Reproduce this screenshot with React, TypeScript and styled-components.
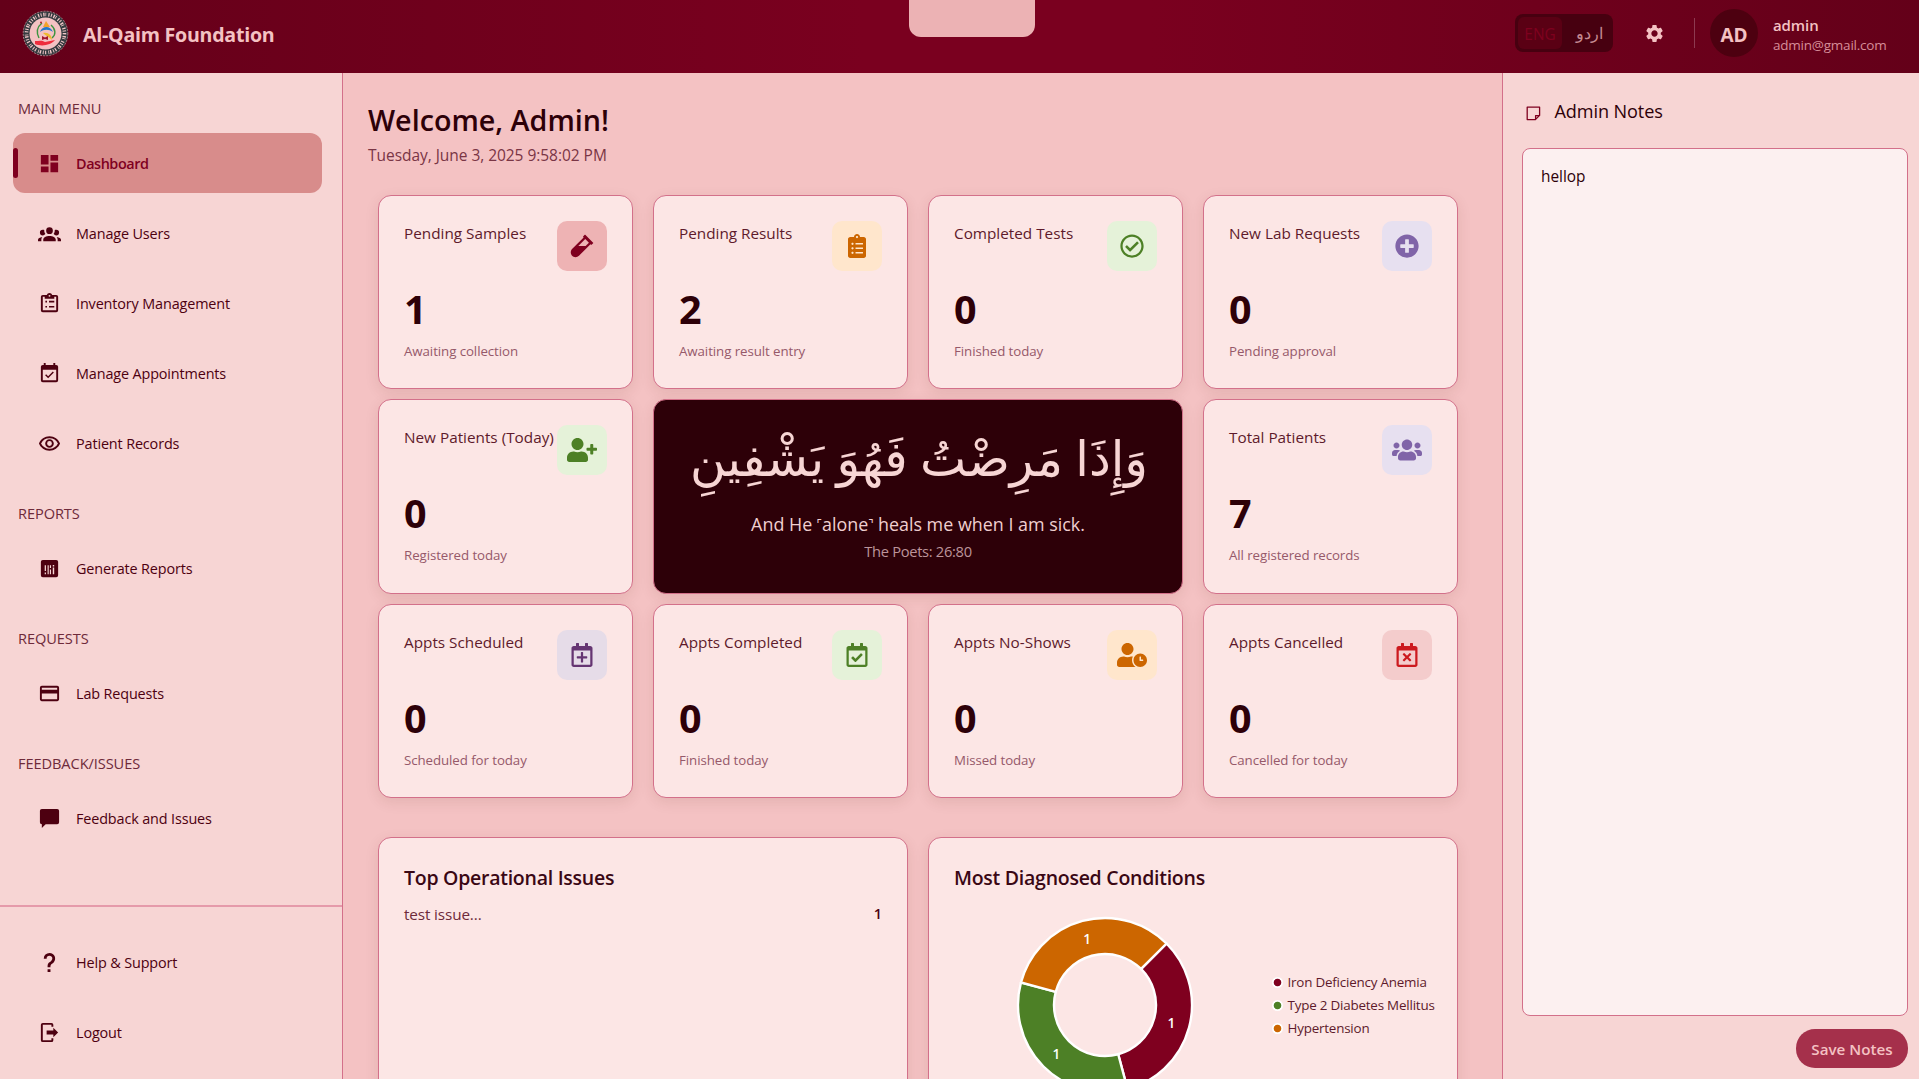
import React from 'react';
import styled, { createGlobalStyle } from 'styled-components';
import { MdDashboard, MdOutlineRemoveRedEye, MdPayment, MdSettings } from 'react-icons/md';
import {
  FaVial, FaClipboardList, FaRegCheckCircle, FaPlusCircle, FaUserPlus, FaUsers,
  FaRegCalendarPlus, FaRegCalendarCheck, FaUserClock, FaRegCalendarTimes,
} from 'react-icons/fa';

const c = {
  wine: '#7f001f', deep: '#4d0010', ink: '#2d0008', line: '#d3708a',
  panel: '#f7d5d4', page: '#f4c2c3', card: '#fce6e5', blush: '#f4c2c3',
};

const GlobalStyle = createGlobalStyle`
  * { box-sizing: border-box; }
  body { margin: 0; overflow: hidden; font-family: "Open Sans", "Noto Sans", sans-serif; color: ${c.ink}; }
`;

const Shell = styled.div`
  width: 1919px; height: 1079px; overflow: hidden;
  display: flex; flex-direction: column; background: ${c.page};
  white-space: nowrap;
`;

/* ---------- top bar ---------- */
const TopBar = styled.header`
  position: relative; flex: none; height: 73px;
  display: flex; align-items: center; padding: 0 32px 7px 22px;
  background: linear-gradient(90deg, #640019 0%, #7a001f 45%, #7a001f 60%, #640019 100%);
`;
const Notch = styled.div`
  position: absolute; left: 909px; top: 0; width: 126px; height: 37px;
  background: #ecb2b4; border-radius: 0 0 12px 12px;
`;
const Brand = styled.div`
  display: flex; align-items: center; gap: 14px; margin-right: auto;
  color: ${c.blush}; font-size: 19.6px; font-weight: 700; letter-spacing: -0.25px; line-height: 20px;
  span { padding-top: 3px; }
`;
const LangSwitch = styled.div`
  display: flex; width: 98px; height: 38px; padding: 3px; border-radius: 8px; background: #470010;
`;
const Lang = styled.div<{ $on?: boolean }>`
  width: ${p => (p.$on ? 44 : 48)}px; display: flex; align-items: center; justify-content: center;
  border-radius: 6px; font-size: ${p => (p.$on ? 15.4 : 15.5)}px;
  background: ${p => (p.$on ? '#5a0014' : 'transparent')};
  color: ${p => (p.$on ? '#7f001f' : '#c48a92')};
  padding: ${p => (p.$on ? '3px 0 0 0' : '0 0 0 7px')};
`;
const Gear = styled.div`
  display: flex; margin: 0 29px 0 31px; color: ${c.blush}; font-size: 21px;
`;
const Rule = styled.div`
  width: 1px; height: 30px; background: #8d3a50; margin-right: 15px;
`;
const Avatar = styled.div`
  width: 48px; height: 48px; border-radius: 50%; background: ${c.deep}; color: ${c.blush};
  display: flex; align-items: center; justify-content: center; padding-top: 3px;
  font-size: 19px; font-weight: 700; margin-right: 15px;
`;
const Account = styled.div`
  width: 114px; line-height: 20px; color: ${c.blush}; padding-top: 4px;
  strong { display: block; font-size: 15px; font-weight: 600; letter-spacing: -0.1px; }
  span { display: block; font-size: 13.5px; color: #d68d98; letter-spacing: -0.22px; }
`;

/* ---------- columns ---------- */
const Columns = styled.div`flex: 1; min-height: 0; display: flex;`;

const Sidebar = styled.nav`
  width: 343px; flex: none; display: flex; flex-direction: column;
  background: ${c.panel}; border-right: 1px solid ${c.line};
`;
const Section = styled.h2`
  margin: 0; padding: 25px 18px 10px 18px; line-height: 20px;
  font-size: 14.6px; font-weight: 500; color: #6e2a3a; letter-spacing: -0.08px;
`;
const NavItem = styled.a<{ $active?: boolean }>`
  position: relative; display: flex; align-items: center; gap: 15px; flex: none;
  height: 60px; margin: 5px 20px 5px 13px; padding-left: 25px; border-radius: 12px;
  font-size: 14.4px; letter-spacing: ${p => (p.$active ? -0.42 : -0.13)}px;
  font-weight: ${p => (p.$active ? 600 : 400)};
  color: ${p => (p.$active ? c.wine : c.deep)};
  background: ${p => (p.$active ? '#d88c8b' : 'transparent')};
  svg { width: 23px; height: 23px; }
`;
const ActiveMark = styled.i`
  position: absolute; left: 0; top: 15px; width: 5px; height: 30px;
  border-radius: 3px; background: ${c.wine};
`;
const NavFooter = styled.div`
  margin-top: auto; height: 174px; padding-top: 20px; border-top: 2px solid #e59aaa;
  display: flex; flex-direction: column;
`;

const Main = styled.main`flex: 1; min-width: 0; padding: 29px 44px 0 25px;`;
const Welcome = styled.h1`
  margin: 0; line-height: 36px; font-size: 28.7px; font-weight: 600;
`;
const DateLine = styled.p`
  margin: 6px 0 0; line-height: 22px; font-size: 15.5px; color: #7a3545; letter-spacing: -0.04px;
`;
const Grid = styled.div`
  display: grid; grid-template-columns: repeat(4, 255px); grid-auto-rows: 194.5px;
  gap: 10px 20px; margin: 28.5px 0 0 10px;
`;
const cardBox = `
  border: 1.5px solid ${c.line}; border-radius: 13px;
  box-shadow: 0 4px 14px rgba(90, 40, 20, 0.1);
`;
const Card = styled.article`
  ${cardBox} background: ${c.card}; padding: 25px 25px 0;
`;
const CardHead = styled.div`display: flex; justify-content: space-between; height: 50px;`;
const CardTitle = styled.div`
  font-size: 15.3px; line-height: 24px; color: #5e1a2b; letter-spacing: 0; width: 152px;
`;
const IconTile = styled.div<{ $bg: string; $fg: string }>`
  width: 50px; height: 50px; border-radius: 10px; flex: none;
  display: flex; align-items: center; justify-content: center;
  background: ${p => p.$bg}; color: ${p => p.$fg};
  svg { height: 24px; width: 30px; }
`;
const Value = styled.div`
  margin-top: 12px; line-height: 52px; font-size: 39.5px; font-weight: 700; color: ${c.ink};
`;
const Caption = styled.div`
  margin-top: 6px; line-height: 20px; font-size: 13.3px; color: #96596a; letter-spacing: -0.08px;
`;
const Verse = styled.article`
  ${cardBox} grid-column: span 2; background: ${c.ink}; color: ${c.panel};
  display: flex; flex-direction: column; align-items: center;
`;
const Arabic = styled.div`
  height: 111px; line-height: 120px; font-size: 49px; padding-left: 2px;
  font-family: "Liberation Serif", "DejaVu Sans", serif;
`;
const English = styled.div`font-size: 17.9px; line-height: 26px; color: #f0cfd0;`;
const Source = styled.div`
  font-size: 14.7px; line-height: 26px; margin-top: 1px; color: #bc949a; letter-spacing: -0.3px;
`;

const Lower = styled.div`
  display: grid; grid-template-columns: 530px 530px; gap: 20px; margin: 39px 0 0 10px;
`;
const Wide = styled(Card)`height: 340px;`;
const WideTitle = styled.h3`
  margin: 1px 0 0; font-size: 19.5px; line-height: 28px; font-weight: 600; letter-spacing: -0.26px; color: #3a0714;
`;
const IssueRow = styled.div`
  display: flex; justify-content: space-between; margin-top: 11px;
  font-size: 15.3px; line-height: 22px; color: #6e2a3a; letter-spacing: -0.13px;
  b { font-weight: 600; color: #4d0010; font-size: 14.5px; }
`;
const ChartRow = styled.div`display: flex; align-items: center; margin: 23px 0 0 60.5px;`;
const Donut = styled.svg`
  width: 180px; height: 180px; flex: none;
  text { fill: #fff; font-size: 13.5px; font-weight: 600; text-anchor: middle; dominant-baseline: central; }
`;
const Legend = styled.ul`
  list-style: none; margin: 0 0 0 77px; padding: 0;
  font-size: 13.4px; line-height: 23px; color: #5e1a2b; letter-spacing: -0.2px;
`;
const LegendItem = styled.li<{ $dot: string }>`
  display: flex; align-items: center; gap: 5px;
  &::before {
    content: ''; width: 11px; height: 11px; border-radius: 50%;
    background: radial-gradient(circle, ${p => p.$dot} 3.4px, #fff 4.2px);
  }
`;

const Notes = styled.aside`
  width: 417px; flex: none; padding: 23px 11px 0 19px; display: flex; flex-direction: column;
  background: ${c.panel}; border-left: 1.5px solid ${c.line};
`;
const NotesHead = styled.div`
  display: flex; align-items: center; gap: 13.5px; padding-left: 4px; height: 30px;
  font-size: 18.1px; letter-spacing: -0.1px;
  svg { width: 15px; height: 15px; margin-top: 5px; }
`;
const NotesArea = styled.textarea`
  margin-top: 22px; height: 868px; width: 386px; padding: 17px 18px; resize: none; outline: 0;
  border: 1.5px solid ${c.line}; border-radius: 8px; background: #fcf0f0;
  font: 15.4px/22px "Open Sans", "Noto Sans", sans-serif; color: ${c.ink};
`;
const Save = styled.button`
  align-self: flex-end; margin-top: 13px; width: 112px; height: 39px; padding: 0; border: 0;
  border-radius: 19px; background: #a5304b; color: ${c.blush};
  font: 600 15.2px "Open Sans", "Noto Sans", sans-serif; letter-spacing: 0;
`;

/* ---------- drawings ---------- */
const glyphs = {
  group: 'M12,5.5A3.5,3.5 0 0,1 15.5,9A3.5,3.5 0 0,1 12,12.5A3.5,3.5 0 0,1 8.5,9A3.5,3.5 0 0,1 12,5.5M5,8C5.56,8 6.08,8.15 6.53,8.42C6.38,9.85 6.8,11.27 7.66,12.38C7.16,13.34 6.16,14 5,14A3,3 0 0,1 2,11A3,3 0 0,1 5,8M19,8A3,3 0 0,1 22,11A3,3 0 0,1 19,14C17.84,14 16.84,13.34 16.34,12.38C17.2,11.27 17.62,9.85 17.47,8.42C17.92,8.15 18.44,8 19,8M5.5,18.25C5.5,16.18 8.41,14.5 12,14.5C15.59,14.5 18.5,16.18 18.5,18.25V20H5.5V18.25M0,20V18.5C0,17.11 1.89,15.94 4.45,15.6C3.86,16.28 3.5,17.22 3.5,18.25V20H0M24,20H20.5V18.25C20.5,17.22 20.14,16.28 19.55,15.6C22.11,15.94 24,17.11 24,18.5V20Z',
  clipboard: 'M19,3H14.82C14.4,1.84 13.3,1 12,1C10.7,1 9.6,1.84 9.18,3H5A2,2 0 0,0 3,5V19A2,2 0 0,0 5,21H19A2,2 0 0,0 21,19V5A2,2 0 0,0 19,3M12,3A1,1 0 0,1 13,4A1,1 0 0,1 12,5A1,1 0 0,1 11,4A1,1 0 0,1 12,3M7,7H17V5H19V19H5V5H7V7M7.7,9.2H9.4V10.9H7.7ZM11.5,9.2H17V10.9H11.5ZM7.7,14.5H9.4V16.2H7.7ZM11.5,14.5H17V16.2H11.5Z',
  calendar: 'M19,19V8H5V19H19M16,1H18V3H19A2,2 0 0,1 21,5V19A2,2 0 0,1 19,21H5A2,2 0 0,1 3,19V5A2,2 0 0,1 5,3H6V1H8V3H16V1M16.53,11.06L15.47,10L10.59,14.88L8.47,12.76L7.41,13.82L10.59,17L16.53,11.06Z',
  report: 'M5,3H19A2,2 0 0,1 21,5V19A2,2 0 0,1 19,21H5A2,2 0 0,1 3,19V5A2,2 0 0,1 5,3M7,8.5V14.5H8.3V8.5ZM7,16.3V18H8.3V16.3ZM10,8.5V18H11.2V8.5ZM12.4,8.5V11.5H13.6V8.5ZM12.4,13V18H13.6V13ZM15.4,8.3V9.8H16.9V8.3ZM15.4,11V18H16.9V11Z',
  bubble: 'M4,2H20A2,2 0 0,1 22,4V16A2,2 0 0,1 20,18H8L4,22V18A2,2 0 0,1 2,16V4A2,2 0 0,1 4,2Z',
  help: 'M10,19H13V22H10V19M12,2C17.35,2.22 19.68,7.62 16.5,11.67C15.67,12.67 14.33,13.33 13.67,14.17C13,15 13,16 13,17H10C10,15.33 10,13.92 10.67,12.92C11.33,11.92 12.67,11.33 13.5,10.67C15.92,8.43 15.32,5.26 12,5A3,3 0 0,0 9,8H6A6,6 0 0,1 12,2Z',
  logout: 'M16,17V14H9V10H16V7L21,12L16,17M14,2A2,2 0 0,1 16,4V6H14V4H5V20H14V18H16V20A2,2 0 0,1 14,22H5A2,2 0 0,1 3,20V4A2,2 0 0,1 5,2H14Z',
};
const Glyph = ({ name }: { name: keyof typeof glyphs }) => (
  <svg viewBox="0 0 24 24" fill="currentColor" fillRule="evenodd"><path d={glyphs[name]} /></svg>
);

const Logo = () => (
  <svg width="47" height="47" viewBox="0 0 47 47" fill="none">
    <circle cx="23.5" cy="23.5" r="22.3" fill="#343b3f" stroke="#a8858b" strokeWidth="1" strokeDasharray="2 1.2" />
    <circle cx="23.5" cy="23.5" r="19" stroke="#f0c4c6" strokeWidth="3.6" strokeDasharray="1 1.6 1.4 .9 .8 2.2 1.2 1.4" />
    <circle cx="23.5" cy="23.5" r="16" fill={c.blush} />
    <path d="M20 13c-5 4-6 9-3 15M29 15c5 4 5 10 1 13" stroke="#3d9440" strokeWidth="1.4" />
    <path d="M24 11l4 6h-7z" fill="#f2a12b" />
    <circle cx="19" cy="12.5" r="1" fill="#b3202c" />
    <path d="M18 22c2-6 10-7 13 0-4-3-9-3-13 0z" fill="#2479c9" />
    <path d="M21 23c5-1 9 2 9 7-3-3-6-4-9-7z" fill="#edb92f" />
    <path d="M20 26l3 1.5 3-1.5v4l-3-1-3 1z" fill="#a31830" />
    <path d="M13 31c4 0 7-1 10 1l10-2c-4 5-13 7-20 4z" fill="#ee2d3c" />
  </svg>
);

const StickyNote = () => (
  <svg viewBox="0 0 15 15" fill="none" stroke={c.wine} strokeWidth="1.3" strokeLinejoin="round">
    <path d="M1.2 1.2h12.4v8.200l-4.200 4.200H1.200zM9.600 13.400V9.600h3.800" />
  </svg>
);

const at = (deg: number, r: number) => {
  const a = ((deg - 90) * Math.PI) / 180;
  return [90 + r * Math.cos(a), 90 + r * Math.sin(a)];
};
const slice = (from: number, to: number) => {
  const [a, b, d, e] = [at(from, 87), at(to, 87), at(to, 51), at(from, 51)];
  return `M${a} A87 87 0 0 1 ${b} L${d} A51 51 0 0 0 ${e}Z`;
};
const conditions = [
  { name: 'Iron Deficiency Anemia', color: '#7f001f', start: 45 },
  { name: 'Type 2 Diabetes Mellitus', color: '#4d8026', start: 165 },
  { name: 'Hypertension', color: '#cc6600', start: 285 },
];

const tones = {
  red: ['#eeb3b4', '#7f001f'], orange: ['#ffe6cc', '#cc6600'], green: ['#e5f2d9', '#4d8026'],
  lilac: ['#e7e0f0', '#8064a8'], plum: ['#e6dce8', '#653572'], alert: ['#f4cccc', '#cc1a1f'],
};
type StatProps = { title: string; value: number; note: string; tone: keyof typeof tones; icon: React.ReactNode };
const Stat = ({ title, value, note, tone, icon }: StatProps) => (
  <Card>
    <CardHead>
      <CardTitle>{title}</CardTitle>
      <IconTile $bg={tones[tone][0]} $fg={tones[tone][1]}>{icon}</IconTile>
    </CardHead>
    <Value>{value}</Value>
    <Caption>{note}</Caption>
  </Card>
);

export default function App() {
  return (
    <>
      <GlobalStyle />
      <Shell>
        <TopBar>
          <Notch />
          <Brand><Logo /><span>Al-Qaim Foundation</span></Brand>
          <LangSwitch><Lang $on>ENG</Lang><Lang>اردو</Lang></LangSwitch>
          <Gear><MdSettings /></Gear>
          <Rule />
          <Avatar>AD</Avatar>
          <Account><strong>admin</strong><span>admin@gmail.com</span></Account>
        </TopBar>
        <Columns>
          <Sidebar>
            <Section>MAIN MENU</Section>
            <NavItem $active><ActiveMark /><MdDashboard />Dashboard</NavItem>
            <NavItem><Glyph name="group" />Manage Users</NavItem>
            <NavItem><Glyph name="clipboard" />Inventory Management</NavItem>
            <NavItem><Glyph name="calendar" />Manage Appointments</NavItem>
            <NavItem><MdOutlineRemoveRedEye />Patient Records</NavItem>
            <Section>REPORTS</Section>
            <NavItem><Glyph name="report" />Generate Reports</NavItem>
            <Section>REQUESTS</Section>
            <NavItem><MdPayment />Lab Requests</NavItem>
            <Section>FEEDBACK/ISSUES</Section>
            <NavItem><Glyph name="bubble" />Feedback and Issues</NavItem>
            <NavFooter>
              <NavItem><Glyph name="help" />Help &amp; Support</NavItem>
              <NavItem><Glyph name="logout" />Logout</NavItem>
            </NavFooter>
          </Sidebar>
          <Main>
            <Welcome>Welcome, Admin!</Welcome>
            <DateLine>Tuesday, June 3, 2025 9:58:02 PM</DateLine>
            <Grid>
              <Stat title="Pending Samples" value={1} note="Awaiting collection" tone="red" icon={<FaVial />} />
              <Stat title="Pending Results" value={2} note="Awaiting result entry" tone="orange" icon={<FaClipboardList />} />
              <Stat title="Completed Tests" value={0} note="Finished today" tone="green" icon={<FaRegCheckCircle />} />
              <Stat title="New Lab Requests" value={0} note="Pending approval" tone="lilac" icon={<FaPlusCircle />} />
              <Stat title="New Patients (Today)" value={0} note="Registered today" tone="green" icon={<FaUserPlus />} />
              <Verse>
                <Arabic dir="rtl">وَإِذَا مَرِضْتُ فَهُوَ يَشْفِينِ</Arabic>
                <English>And He ˹alone˺ heals me when I am sick.</English>
                <Source>The Poets: 26:80</Source>
              </Verse>
              <Stat title="Total Patients" value={7} note="All registered records" tone="lilac" icon={<FaUsers />} />
              <Stat title="Appts Scheduled" value={0} note="Scheduled for today" tone="plum" icon={<FaRegCalendarPlus />} />
              <Stat title="Appts Completed" value={0} note="Finished today" tone="green" icon={<FaRegCalendarCheck />} />
              <Stat title="Appts No-Shows" value={0} note="Missed today" tone="orange" icon={<FaUserClock />} />
              <Stat title="Appts Cancelled" value={0} note="Cancelled for today" tone="alert" icon={<FaRegCalendarTimes />} />
            </Grid>
            <Lower>
              <Wide>
                <WideTitle>Top Operational Issues</WideTitle>
                <IssueRow><span>test issue...</span><b>1</b></IssueRow>
              </Wide>
              <Wide>
                <WideTitle>Most Diagnosed Conditions</WideTitle>
                <ChartRow>
                  <Donut viewBox="0 0 180 180">
                    {conditions.map(({ name, color, start }) => {
                      const [x, y] = at(start + 60, 68.7);
                      return (
                        <g key={name}>
                          <path d={slice(start, start + 120)} fill={color} stroke="#fff" strokeWidth="2.4" />
                          <text x={x} y={y}>1</text>
                        </g>
                      );
                    })}
                  </Donut>
                  <Legend>
                    {conditions.map(i => <LegendItem key={i.name} $dot={i.color}>{i.name}</LegendItem>)}
                  </Legend>
                </ChartRow>
              </Wide>
            </Lower>
          </Main>
          <Notes>
            <NotesHead><StickyNote />Admin Notes</NotesHead>
            <NotesArea defaultValue="hellop" spellCheck={false} />
            <Save>Save Notes</Save>
          </Notes>
        </Columns>
      </Shell>
    </>
  );
}
